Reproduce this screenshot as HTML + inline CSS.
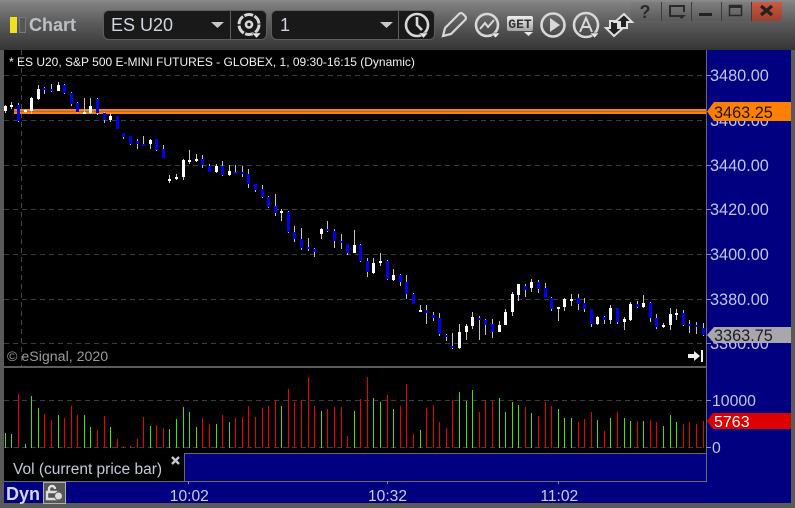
<!DOCTYPE html>
<html><head><meta charset="utf-8"><style>
html,body{margin:0;padding:0;background:#5a5a5a}
#w{position:relative;width:795px;height:508px;overflow:hidden;background:#5c5c5c;font-family:"Liberation Sans",sans-serif}
svg{position:absolute;left:0;top:0}
text{font-family:"Liberation Sans",sans-serif}
</style></head><body><div id="w">
<svg width="795" height="508" viewBox="0 0 795 508">
<defs>
<linearGradient id="tb" x1="0" y1="0" x2="0" y2="1"><stop offset="0" stop-color="#8a8a8a"/><stop offset=".1" stop-color="#7c7c7c"/><stop offset=".45" stop-color="#5c5c5c"/><stop offset="1" stop-color="#343434"/></linearGradient>
<linearGradient id="btn" x1="0" y1="0" x2="0" y2="1"><stop offset="0" stop-color="#7e7e7e"/><stop offset="1" stop-color="#5a5a5a"/></linearGradient>
<linearGradient id="cls" x1="0" y1="0" x2="0" y2="1"><stop offset="0" stop-color="#cc5a44"/><stop offset="1" stop-color="#9c3f2e"/></linearGradient>
<linearGradient id="gt" x1="0" y1="0" x2="0" y2="1"><stop offset="0" stop-color="#eee"/><stop offset="1" stop-color="#a4a4a4"/></linearGradient>
</defs>
<rect width="795" height="508" fill="#5a5a5a"/>
<rect width="795" height="50" fill="url(#tb)"/>
<!-- panels -->
<rect x="4" y="50" width="787" height="453" fill="#000080"/>
<rect x="4" y="50" width="702" height="316" fill="#000"/>
<rect x="4" y="368" width="702" height="85" fill="#000"/>
<rect x="4" y="453" width="181" height="28" fill="#000"/>
<g shape-rendering="crispEdges">
<rect x="4" y="366" width="703" height="2" fill="#5c5c5c"/>
<rect x="706" y="50" width="1" height="432" fill="#6a6a6a"/>
<rect x="185" y="453" width="522" height="1" fill="#6a6a6a"/>
<rect x="4" y="481" width="703" height="1" fill="#6a6a6a"/>
<rect x="184" y="453" width="1" height="28" fill="#6a6a6a"/>
<path d="M188.5 481v3M387.5 481v3M558.5 481v3" stroke="#8a8a9a" fill="none"/>
<!-- grid -->
<path d="M4 75.5H706M4 120.5H706M4 165.5H706M4 209.5H706M4 254.5H706M4 299.5H706M4 343.5H706M4 400.5H706M4 447.5H706" stroke="#3c3c3c" stroke-dasharray="5 4" fill="none"/>
<path d="M21.5 50V366" stroke="#484848" stroke-dasharray="5 4" fill="none"/>
<path d="M706 75.5h5M706 165.5h5M706 209.5h5M706 254.5h5M706 299.5h5M706 343.5h5M706 400.5h5M706 447.5h5" stroke="#8a8aa0" fill="none"/>
<!-- orange lines -->
<rect x="14" y="109" width="692" height="2" fill="#ff8000"/>
<rect x="14" y="111" width="692" height="1" fill="#9a7050"/>
<rect x="14" y="112" width="692" height="2" fill="#ff8000"/>
<!-- wicks -->
<path fill="none" stroke="#c4c4c4" d="M5.5 105V113M11.5 102V109M18.5 103V122M25.5 109V113M31.5 97V114M38.5 85V100M44.5 87V94M51.5 84V92M58.5 82V91M64.5 84V94M71.5 92V106M77.5 102V113M84.5 98V114M90.5 98V114M97.5 98V115M104.5 112V123M110.5 113V122M117.5 116V129M123.5 133V139M130.5 136V145M137.5 139V149M143.5 136V146M150.5 139V149M156.5 139V151M163.5 145V158M169.5 175V183M176.5 174V180M183.5 159V180M189.5 150V164M196.5 154V162M202.5 155V168M209.5 164V172M216.5 164V173M222.5 161V176M229.5 165V176M235.5 165V174M242.5 166V177M248.5 169V188M255.5 184V192M262.5 185V198M268.5 196V208M275.5 194V216M281.5 209V221M288.5 211V233M294.5 226V242M301.5 228V250M308.5 238V251M314.5 248V257M321.5 228V239M327.5 221V232M334.5 229V248M341.5 234V249M347.5 244V255M354.5 230V253M360.5 244V262M367.5 258V277M373.5 258V274M380.5 253V266M387.5 260V280M393.5 269V281M400.5 274V286M406.5 275V299M413.5 293V304M420.5 305V312M426.5 305V324M433.5 312V321M439.5 313V336M446.5 334V341M452.5 333V349M459.5 324V349M466.5 324V340M472.5 312V329M479.5 316V340M485.5 319V335M492.5 319V338M499.5 321V332M505.5 309V325M512.5 292V316M518.5 284V301M525.5 284V297M531.5 279V292M538.5 280V293M545.5 283V298M551.5 297V311M558.5 307V321M564.5 298V311M571.5 294V306M578.5 294V310M584.5 298V312M591.5 309V327M597.5 316V325M604.5 316V324M610.5 305V324M617.5 308V324M624.5 317V330M630.5 302V321M637.5 301V308M643.5 295V308M650.5 302V322M656.5 314V329M663.5 323V328M670.5 308V330M676.5 309V320M683.5 310V326M689.5 320V333M696.5 322V334M703.5 323V336"/>
<!-- white bodies -->
<path fill="none" stroke="#fff" stroke-width="3.4" d="M5.5 106V111M11.5 105V107M25.5 110V112M31.5 98V111M38.5 89V99M58.5 85V91M84.5 112V114M90.5 106V113M110.5 116V120M150.5 140V144M169.5 179V181M176.5 177V179M183.5 160V177M189.5 160V162M196.5 159V161M216.5 166V172M229.5 171V175M281.5 211V213M321.5 229V234M354.5 245V253M373.5 263V273M380.5 261V263M393.5 275V280M420.5 310V312M459.5 332V348M466.5 326V332M472.5 317V326M499.5 325V332M505.5 312V325M512.5 294V312M518.5 284V295M531.5 282V288M558.5 307V309M564.5 299V307M571.5 299V301M597.5 317V324M610.5 308V320M624.5 319V322M630.5 304V320M643.5 303V307M663.5 325V327M670.5 314V325M676.5 313V315"/>
<!-- blue bodies -->
<path fill="none" stroke="#0000ee" stroke-width="3.4" d="M18.5 105V121M44.5 88V90M51.5 89V91M64.5 85V93M71.5 93V104M77.5 103V112M97.5 99V113M104.5 113V120M117.5 116V129M123.5 133V137M130.5 136V144M137.5 141V144M143.5 144V146M156.5 139V150M163.5 149V158M202.5 159V165M209.5 166V172M222.5 166V175M235.5 172V174M242.5 172V174M248.5 174V184M255.5 184V190M262.5 189V197M268.5 197V207M275.5 206V213M288.5 212V232M294.5 232V239M301.5 239V248M308.5 247V249M314.5 249V252M327.5 229V231M334.5 231V241M341.5 241V243M347.5 244V253M360.5 245V261M367.5 261V272M387.5 261V279M400.5 275V282M406.5 282V294M413.5 294V304M426.5 310V313M433.5 315V318M439.5 318V334M446.5 335V337M452.5 346V348M479.5 318V320M485.5 320V325M492.5 324V332M525.5 286V290M538.5 282V289M545.5 288V298M551.5 298V309M578.5 298V304M584.5 303V309M591.5 309V324M604.5 317V320M617.5 308V322M637.5 304V307M650.5 303V318M656.5 318V327M683.5 313V325M689.5 324V326M696.5 325V327M703.5 328V335"/>
<!-- volume -->
<path fill="none" stroke="#ee0000" d="M18.5 394V448M44.5 414V448M51.5 420V448M64.5 418V448M71.5 406V448M77.5 415V448M97.5 430V448M104.5 416V448M117.5 439V448M123.5 446V448M130.5 446V448M137.5 439V448M143.5 417V448M156.5 425V448M163.5 428V448M202.5 418V448M209.5 424V448M222.5 415V448M235.5 418V448M242.5 417V448M248.5 406V448M255.5 417V448M262.5 408V448M268.5 406V448M275.5 400V448M288.5 389V448M294.5 402V448M301.5 400V448M308.5 377V448M314.5 406V448M327.5 409V448M334.5 407V448M341.5 407V448M347.5 436V448M360.5 399V448M367.5 377V448M387.5 395V448M400.5 406V448M406.5 384V448M413.5 434V448M426.5 408V448M433.5 405V448M439.5 422V448M446.5 428V448M452.5 400V448M479.5 412V448M485.5 400V448M492.5 401V448M525.5 407V448M538.5 416V448M545.5 402V448M551.5 406V448M578.5 422V448M584.5 419V448M591.5 412V448M604.5 431V448M617.5 412V448M637.5 421V448M650.5 420V448M656.5 422V448M683.5 424V448M689.5 422V448M696.5 424V448M703.5 421V448"/>
<path fill="none" stroke="#44e010" d="M5.5 433V448M11.5 434V448M25.5 444V448M31.5 396V448M38.5 408V448M58.5 415V448M84.5 415V448M90.5 427V448M110.5 427V448M150.5 426V448M169.5 429V448M176.5 419V448M183.5 407V448M189.5 412V448M196.5 427V448M216.5 424V448M229.5 422V448M281.5 406V448M321.5 411V448M354.5 411V448M373.5 398V448M380.5 402V448M393.5 409V448M420.5 430V448M459.5 392V448M466.5 401V448M472.5 390V448M499.5 398V448M505.5 412V448M512.5 402V448M518.5 405V448M531.5 413V448M558.5 409V448M564.5 418V448M571.5 418V448M597.5 420V448M610.5 418V448M624.5 418V448M630.5 421V448M643.5 421V448M663.5 426V448M670.5 415V448M676.5 422V448"/>
</g>
<!-- chart text -->
<text x="9" y="66" font-size="12" fill="#f2f2f2">* ES U20, S&amp;P 500 E-MINI FUTURES - GLOBEX, 1, 09:30-16:15 (Dynamic)</text>
<text x="7" y="361" font-size="14.2" fill="#9a9a9a">© eSignal, 2020</text>
<path d="M688 354h6v-3l6 5-6 5v-3h-6z" fill="#eee"/><rect x="701" y="350" width="2" height="12" fill="#eee"/>
<!-- axis -->
<g font-size="16.3" fill="#c2c6ea">
<text x="710" y="81">3480.00</text>
<text x="710" y="126">3460.00</text>
<text x="710" y="171">3440.00</text>
<text x="710" y="215">3420.00</text>
<text x="710" y="260">3400.00</text>
<text x="710" y="305">3380.00</text>
<text x="710" y="349">3360.00</text>
</g>
<g font-size="15.8" fill="#c2c6ea">
<text x="712" y="406">10000</text>
<text x="712" y="453">0</text>
</g>
<path d="M707 111.5L714 102H791V121H714Z" fill="#ff8000"/>
<path d="M707 335L714 327H791V343H714Z" fill="#a8a8ac"/>
<path d="M707 421L713 413H791V429H713Z" fill="#dc0000"/>
<text x="714" y="118" font-size="16.3" fill="#201000">3463.25</text>
<text x="714" y="341" font-size="16.3" fill="#1c1c24">3363.75</text>
<text x="714" y="427" font-size="16" fill="#fff">5763</text>
<!-- vol legend -->
<text x="13" y="474" font-size="15.5" fill="#c4cad8">Vol (current price bar)</text>
<path d="M172 457l7 7M179 457l-7 7" stroke="#c8c8c8" stroke-width="2.4"/>
<!-- bottom -->
<text x="6" y="500" font-size="18" font-weight="bold" fill="#d4d4e4">Dyn</text>
<rect x="43.5" y="482.5" width="22" height="21" fill="#565656" stroke="#b0b0b0"/>
<path d="M47 499v-7h9v7zM49 492v-3a3 3 0 0 1 6 0" fill="none" stroke="#ddd" stroke-width="2.4"/>
<circle cx="58.5" cy="496" r="4" fill="#ddd" stroke="#565656"/>
<g font-size="15.6" fill="#c8cce8" text-anchor="middle">
<text x="189.3" y="501">10:02</text>
<text x="387.5" y="501">10:32</text>
<text x="559.3" y="501">11:02</text>
</g>
<!-- title bar -->
<rect x="10" y="17" width="7" height="16" fill="#f0e020"/>
<rect x="19.5" y="17.5" width="6" height="15" fill="#555" stroke="#777"/>
<text x="29" y="31" font-size="18" font-weight="bold" fill="#bcc0c4">Chart</text>
<rect x="103.5" y="10.5" width="163" height="29" rx="5" fill="#191919" stroke="#5e5e5e"/>
<rect x="230" y="11" width="1" height="28" fill="#606060"/>
<text x="111" y="31" font-size="18" fill="#d0d6e0">ES U20</text>
<path d="M211 22h13l-6.5 6z" fill="#c8c8c8"/>
<rect x="271.5" y="10.5" width="163" height="29" rx="5" fill="#191919" stroke="#5e5e5e"/>
<rect x="398" y="11" width="1" height="28" fill="#606060"/>
<text x="280" y="31" font-size="18" fill="#d0d6e0">1</text>
<path d="M380 22h13l-6.5 6z" fill="#c8c8c8"/>
<g fill="none" stroke="#d8d8d8" stroke-width="2.6">
<circle cx="249" cy="24.5" r="10" stroke-width="3" stroke-dasharray="9 1.5"/>
<circle cx="249" cy="24.5" r="3"/>
<circle cx="417" cy="25" r="11"/>
<path d="M417 17V25L422 30"/>
<path d="M443 36L445 28L459 14Q461 12 463 14L465 16Q467 18 465 20L451 34Z" stroke-width="2.2"/>
<circle cx="487" cy="25" r="11"/>
<path d="M480 29L485 23L488 27L494 20" stroke-width="2"/>
<circle cx="553" cy="25" r="11.5"/>
<circle cx="586" cy="25" r="12"/>
<path d="M580 32L586 18L592 32M582 27H590" stroke-width="2"/>
</g>
<path d="M550 18L560 25L550 32Z" fill="#d8d8d8"/>
<path d="M252 33h9l-4.500 5zM419 33h9l-4.500 5zM491 33h9l-4.500 5zM590 33h9l-4.500 5z" fill="#e8e8e8" stroke="#333" stroke-width=".5"/>
<rect x="507" y="16" width="26" height="15" rx="2" fill="url(#gt)"/>
<text x="520" y="28" font-size="13" font-weight="bold" fill="#333" text-anchor="middle" style="font-family:'Liberation Mono',monospace">GET</text>
<path d="M524 32h9l-4.500 4z" fill="#e8e8e8"/>
<path d="M610 21h8v7h5l-9 8-8-8h4z" fill="#222" stroke="#e0e0e0" stroke-width="2"/>
<path d="M620 28h7v-6h5l-8-8-9 8h5z" fill="#222" stroke="#e0e0e0" stroke-width="2"/>
<!-- window buttons -->
<path d="M631 2H782V16Q782 21 777 21H636Q631 21 631 16Z" fill="url(#btn)"/>
<path d="M751 2H782V16Q782 21 777 21H751Z" fill="url(#cls)"/>
<path d="M661.500 2V21M691.500 2V21M721.500 2V21M751.500 2V21" stroke="#3c3c3c"/>
<text x="645" y="18" font-size="18" font-weight="bold" fill="#2a2a2a" text-anchor="middle">?</text>
<path d="M679 16H670V6H684V12" fill="none" stroke="#2a2a2a" stroke-width="2"/>
<path d="M677 15h9l-4.500 4z" fill="#2a2a2a"/>
<rect x="699" y="13" width="13" height="3" fill="#222"/>
<rect x="729.500" y="5.500" width="12" height="10" fill="none" stroke="#2a2a2a" stroke-width="1.500"/><rect x="729" y="5" width="13" height="3" fill="#2a2a2a"/>
<path d="M761 6L772 15M772 6L761 15" stroke="#222" stroke-width="3.200"/>
</svg>
</div></body></html>
